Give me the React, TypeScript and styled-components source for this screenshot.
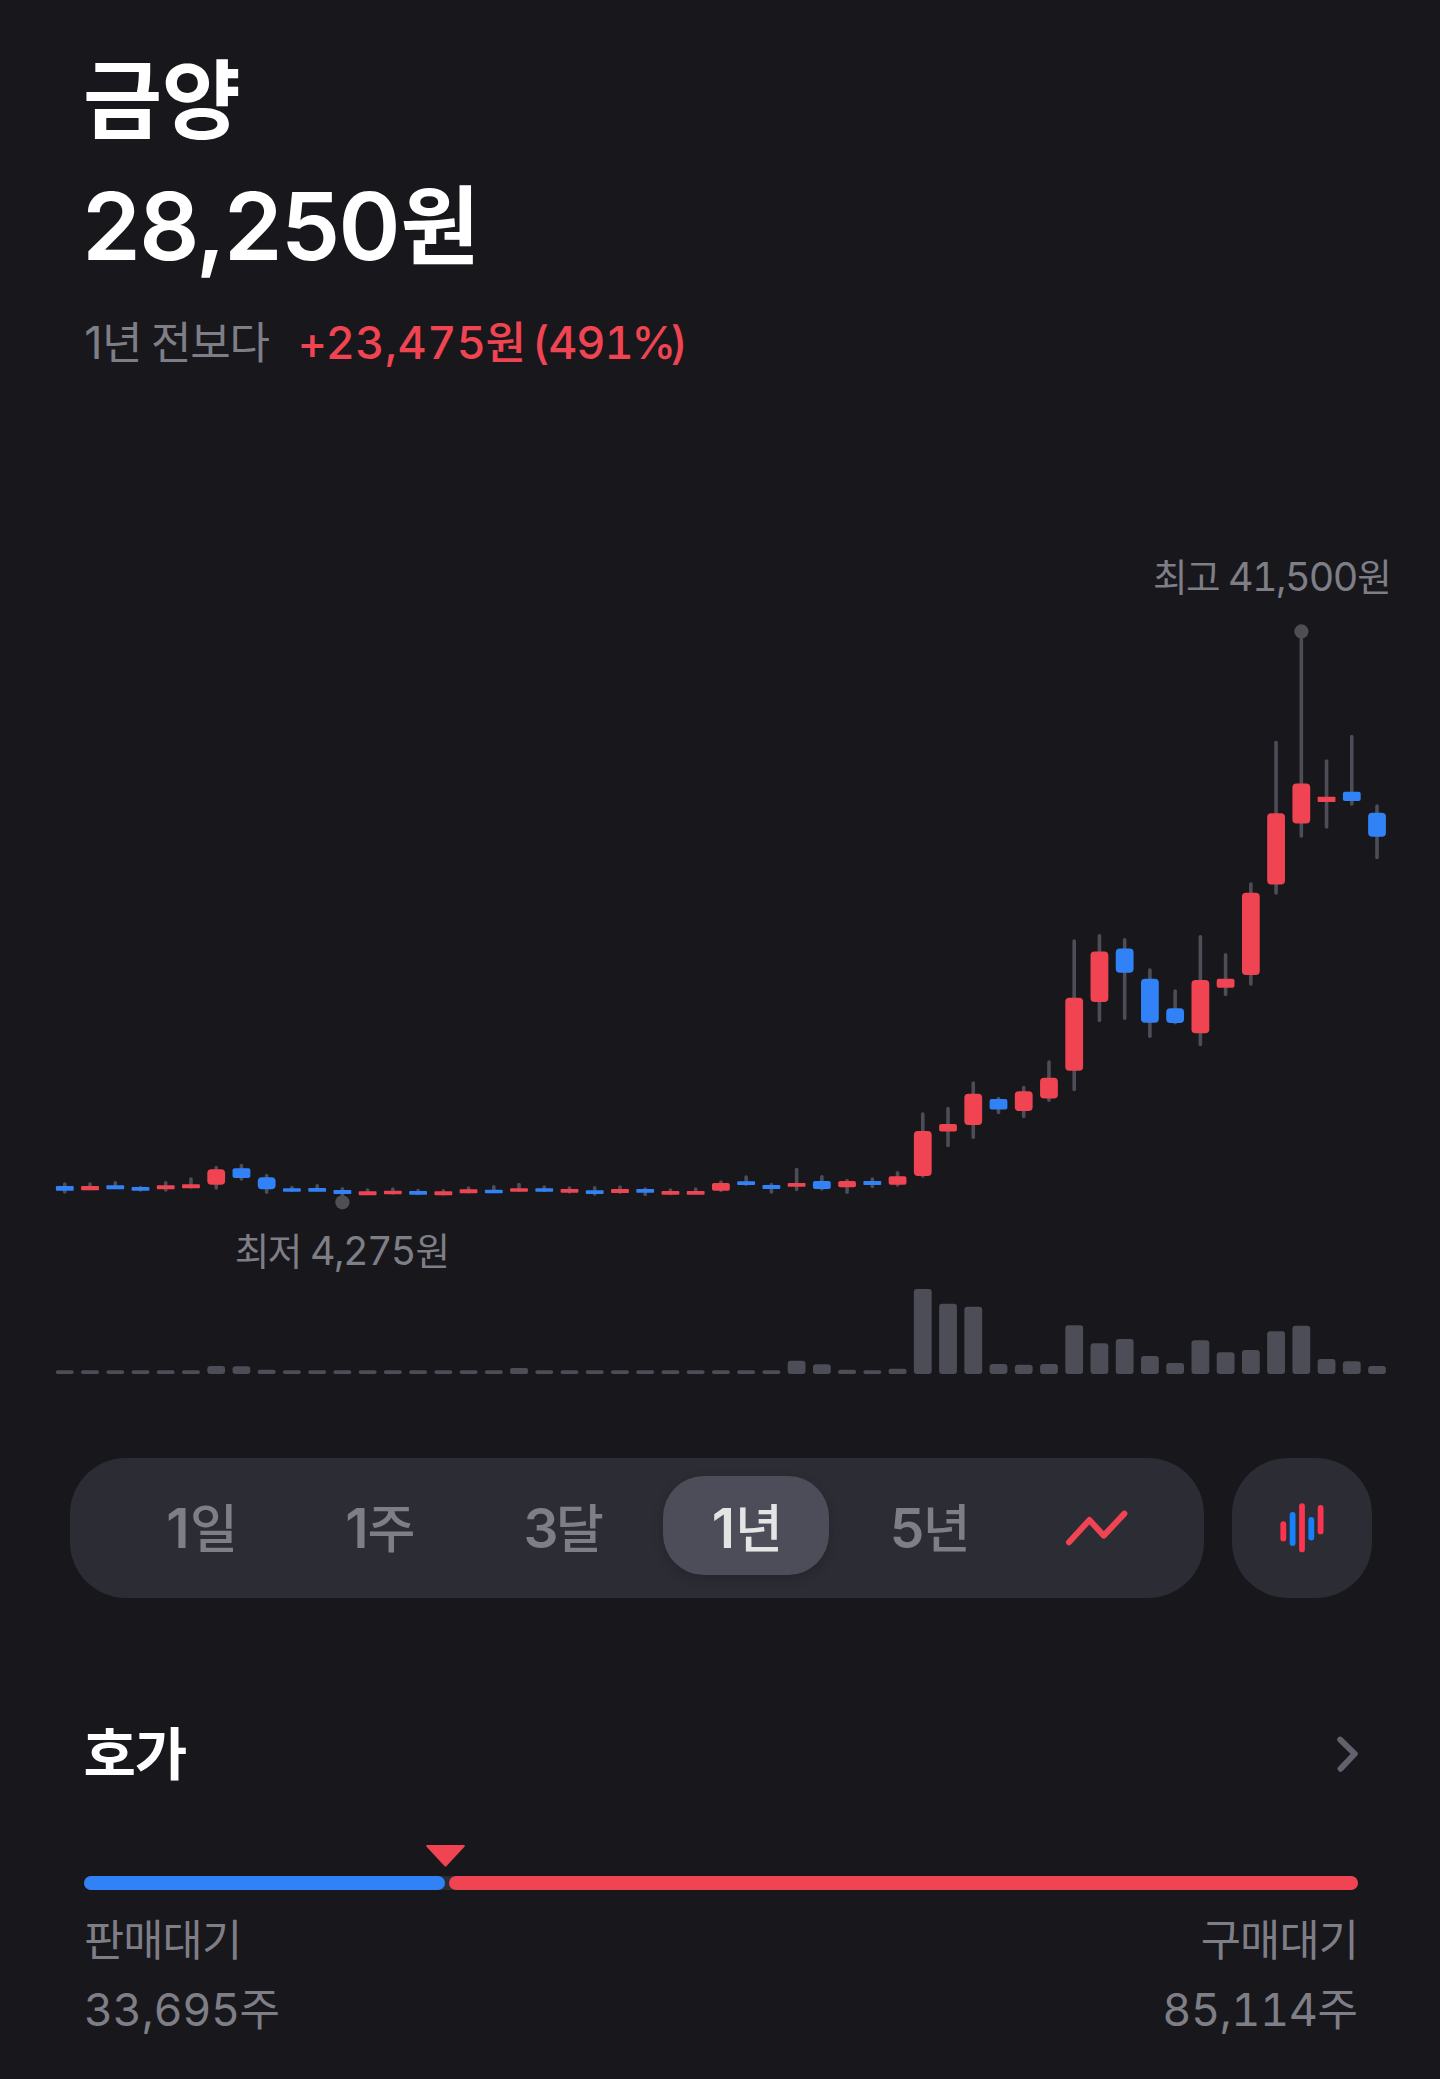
import React from 'react';
import styled, { createGlobalStyle } from 'styled-components';

const color = {
  background: '#18171c',
  surface: '#2c2c35',
  surfaceActive: '#4d4d59',
  rise: '#f04452',
  fall: '#3182f6',
  textMuted: '#7e7e87',
  wick: '#4d4d57',
};

const fontStack = 'Inter, "Noto Sans CJK KR", sans-serif';

const GlobalStyle = createGlobalStyle`
  html, body { margin: 0; background: ${color.background}; }
  *, *::before, *::after { box-sizing: border-box; }
`;

const Page = styled.main`
  width: 1440px;
  height: 2079px;
  overflow: hidden;
  display: flex;
  flex-direction: column;
  background: ${color.background};
  color: #fff;
  font-family: ${fontStack};
`;

const Line = styled.div<{ $size: number; $leading: number }>`
  font-size: ${(p) => p.$size}px;
  line-height: ${(p) => p.$leading}px;
  height: ${(p) => p.$leading}px;
  white-space: nowrap;
`;

interface RunProps {
  $size: number;
  $weight: number;
  $gap?: number;
  $tracking?: number;
  $tone?: string;
  $raise?: number;
}

const Run = styled.span<RunProps>`
  font-size: ${(p) => p.$size}px;
  font-weight: ${(p) => p.$weight};
  line-height: 0;
  margin-left: ${(p) => p.$gap ?? 0}px;
  letter-spacing: ${(p) => p.$tracking ?? 0}px;
  color: ${(p) => p.$tone ?? 'inherit'};
  vertical-align: ${(p) => p.$raise ?? 0}px;
`;

const Figures = styled(Run)`
  font-variant-numeric: tabular-nums;
`;

const Summary = styled.header`
  height: 370px;
  padding: 49px 83px 0;
`;

const PriceLine = styled(Line)`
  margin-top: 17px;
`;

const ChangeLine = styled(Line)`
  margin-top: 33px;
  color: ${color.textMuted};
`;

const ChartArea = styled.section`
  height: 1088px;
`;

const ChartSvg = styled.svg`
  display: block;
`;

const ChartLabel = styled.text`
  font-family: ${fontStack};
  fill: ${color.textMuted};
  font-variant-numeric: tabular-nums;
`;

const Controls = styled.nav`
  display: flex;
  gap: 28px;
  height: 139.5px;
  padding-left: 70px;
`;

const Periods = styled.div`
  display: flex;
  gap: 17px;
  width: 1134px;
  height: 100%;
  padding: 18px 40px 0 52px;
  border-radius: 56px;
  background: ${color.surface};
`;

const Period = styled.button<{ $width: number; $active?: boolean }>`
  width: ${(p) => p.$width}px;
  height: 99px;
  padding: 0;
  border: 0;
  border-radius: 41px;
  font: 55px/104px ${fontStack};
  text-align: center;
  white-space: nowrap;
  background: ${(p) => (p.$active ? color.surfaceActive : 'transparent')};
  color: ${(p) => (p.$active ? '#e4e4e5' : color.textMuted)};
  box-shadow: ${(p) => (p.$active ? '0 4px 12px rgba(0, 0, 0, 0.18)' : 'none')};
`;

const PeriodLabel = styled.span`
  display: block;
  height: 99px;
`;

const TrendButton = styled.button`
  display: flex;
  align-items: center;
  justify-content: center;
  width: 134px;
  height: 104px;
  padding: 0;
  border: 0;
  background: transparent;
`;

const CandleButton = styled.button`
  display: flex;
  align-items: center;
  justify-content: center;
  width: 140px;
  height: 100%;
  padding: 0;
  border: 0;
  border-radius: 56px;
  background: ${color.surface};
`;

const OrderBook = styled.section`
  padding: 123.5px 82px 0 84px;
`;

const OrderHeader = styled.div`
  display: flex;
  justify-content: space-between;
`;

const Chevron = styled.svg`
  display: block;
  margin-top: 14px;
`;

const Marker = styled.svg`
  display: block;
  margin: 56px 0 8.5px 342px;
`;

const Balance = styled.div`
  display: flex;
  gap: 4px;
  height: 14.5px;
  border-radius: 8px;
  background: ${color.surface};
`;

const Share = styled.div<{ $tone: string; $grow: number }>`
  flex: ${(p) => p.$grow} 0 0;
  border-radius: 8px;
  background: ${(p) => p.$tone};
`;

const Totals = styled.div`
  display: flex;
  justify-content: space-between;
  margin-top: 21px;
  color: ${color.textMuted};
`;

const Total = styled.div<{ $end?: boolean }>`
  text-align: ${(p) => (p.$end ? 'right' : 'left')};
`;

const QuantityLine = styled(Line)`
  margin-top: 4px;
`;

type Candle = [high: number, top: number, bottom: number, low: number, dir: 'r' | 'b', volume: number];

/* Each entry: wick top, body top, body bottom, wick bottom, direction, volume height */
const candles: Candle[] = [
  [1182.3, 1186, 1190.7, 1193.7, 'b', 3.7],
  [1182.3, 1186, 1190.3, 1190.3, 'r', 3.7],
  [1181, 1185.3, 1189.3, 1189.3, 'b', 3.7],
  [1185.7, 1187, 1190.7, 1191.7, 'b', 3.7],
  [1181, 1185.3, 1189.3, 1191.7, 'r', 3.7],
  [1177.3, 1184.3, 1188.3, 1188.7, 'r', 3.7],
  [1165.7, 1169.3, 1184.7, 1189.7, 'r', 8],
  [1163.7, 1168.3, 1178, 1180.7, 'b', 7.7],
  [1173.7, 1177.3, 1189.3, 1194, 'b', 4.3],
  [1185.7, 1188.3, 1191.7, 1192, 'b', 3.7],
  [1184, 1188, 1191.7, 1191.7, 'b', 3.7],
  [1187, 1190, 1194, 1196.7, 'b', 3.7],
  [1188.3, 1191.3, 1195.3, 1195.3, 'r', 3.7],
  [1187.3, 1190.7, 1194.3, 1194.7, 'r', 3.7],
  [1188.7, 1191, 1194.7, 1195.3, 'b', 3.7],
  [1189, 1191.3, 1195.3, 1195.7, 'r', 3.7],
  [1186.3, 1189.3, 1193.3, 1193.7, 'r', 3.7],
  [1185, 1189.7, 1193.3, 1193.3, 'b', 3.7],
  [1182.7, 1188.3, 1191.7, 1192, 'r', 6],
  [1185.3, 1188.3, 1191.7, 1192.3, 'b', 3.7],
  [1186.3, 1189, 1192.7, 1193.7, 'r', 3.7],
  [1186, 1190.3, 1194, 1195.7, 'b', 3.7],
  [1185.3, 1189, 1193, 1194, 'r', 3.7],
  [1187.3, 1189, 1192.7, 1196.3, 'b', 3.7],
  [1188.3, 1191, 1194.7, 1195.3, 'r', 3.7],
  [1187.3, 1191, 1194.7, 1194.7, 'r', 3.7],
  [1180.3, 1183, 1190.7, 1192.3, 'r', 3.7],
  [1175.3, 1181.3, 1185, 1186, 'b', 3.7],
  [1182.7, 1185, 1189, 1193.7, 'b', 3.7],
  [1167.7, 1183, 1186.7, 1191.3, 'r', 13.3],
  [1175, 1181, 1189, 1190.7, 'b', 9.7],
  [1178.7, 1181, 1187.3, 1194, 'r', 4.3],
  [1177.3, 1181, 1185, 1188.3, 'b', 3.7],
  [1171, 1176.3, 1184.7, 1186.7, 'r', 5.3],
  [1112.3, 1131, 1176, 1177.7, 'r', 85],
  [1106.7, 1124, 1131.5, 1147.3, 'r', 70.3],
  [1081.3, 1093.8, 1125, 1139, 'r', 67.3],
  [1096.7, 1099, 1109.5, 1114.3, 'b', 10],
  [1085.7, 1091.3, 1111, 1118.3, 'r', 9.3],
  [1060.3, 1077.8, 1098.5, 1102, 'r', 10],
  [939.3, 997.7, 1070.7, 1091.3, 'r', 48.7],
  [934, 951.5, 1002, 1022.3, 'r', 30.7],
  [938, 948.5, 972.7, 1020, 'b', 35],
  [968.3, 978.7, 1022.7, 1038, 'b', 18],
  [989.3, 1008.3, 1023, 1024.5, 'b', 11],
  [935, 980, 1033.3, 1046.3, 'r', 33.7],
  [953, 978.7, 987.7, 996.3, 'r', 21.7],
  [882.3, 892.7, 975, 985.7, 'r', 24],
  [740.7, 813.3, 884.5, 894.7, 'r', 42.7],
  [631, 783.5, 823.5, 837.7, 'r', 48.3],
  [759.3, 796.8, 802, 828.7, 'r', 15],
  [734.7, 791.7, 801, 805.7, 'b', 12.7],
  [804.3, 812.7, 836.8, 859.3, 'b', 8],
];

const FIRST_X = 64.8;
const STEP = 25.235;
const BODY_WIDTH = 17.8;
const VOLUME_BASE = 1374;

function PriceChart() {
  return (
    <ChartSvg width="1440" height="1088" viewBox="0 370 1440 1088">
      {candles.map(([high, top, bottom, low, dir, volume], i) => {
        const x = FIRST_X + i * STEP;
        const height = bottom - top;
        return (
          <g key={i}>
            <rect x={x - 1.8} y={high} width={3.6} height={low - high} rx={1.8} fill={color.wick} />
            <rect
              x={x - BODY_WIDTH / 2}
              y={top}
              width={BODY_WIDTH}
              height={height}
              rx={height < 6 ? 0.8 : height < 11 ? 2 : 4}
              fill={dir === 'r' ? color.rise : color.fall}
            />
            <rect
              x={x - BODY_WIDTH / 2}
              y={VOLUME_BASE - volume}
              width={BODY_WIDTH}
              height={volume}
              rx={volume < 7 ? 1.8 : 3}
              fill={color.wick}
            />
          </g>
        );
      })}
      <circle cx="1301.4" cy="631.4" r="7.1" fill="#4f4e53" />
      <circle cx="342.4" cy="1202.3" r="7.1" fill="#4f4e53" />
      <ChartLabel y="591.3">
        <tspan x="1153.1" fontSize="37.5" letterSpacing="-1.5">최고</tspan>
        <tspan x="1228" fontSize="39.5" letterSpacing="-1.65">41,500</tspan>
        <tspan x="1357.2" fontSize="37.5">원</tspan>
      </ChartLabel>
      <ChartLabel y="1264.6">
        <tspan x="234.8" fontSize="37.5" letterSpacing="-1.5">최저</tspan>
        <tspan x="310" fontSize="39.5" letterSpacing="-1.65">4,275</tspan>
        <tspan x="415.5" fontSize="37.5">원</tspan>
      </ChartLabel>
    </ChartSvg>
  );
}

const periods = [
  { figure: '1', unit: '일', width: 160, gap: 0.5, shift: 0 },
  { figure: '1', unit: '주', width: 164, gap: -1, shift: -1.2 },
  { figure: '3', unit: '달', width: 166, gap: -2.5, shift: 1.2 },
  { figure: '1', unit: '년', width: 166, gap: 0, shift: 2.4, active: true },
  { figure: '5', unit: '년', width: 166, gap: -1.7, shift: 2.2 },
];

export default function App() {
  return (
    <>
      <GlobalStyle />
      <Page>
        <Summary>
          <Line $size={86} $leading={104}>
            <Run $size={86} $weight={700} $tracking={-0.4}>금양</Run>
          </Line>
          <PriceLine $size={94} $leading={112}>
            <Run $size={94} $weight={600} $gap={-0.8} $tracking={-1.6}>28,250</Run>
            <Run $size={86} $weight={700} $gap={1.4} $raise={2}>원</Run>
          </PriceLine>
          <ChangeLine $size={45} $leading={56}>
            <Run $size={45} $weight={400} $gap={1.3}>1</Run>
            <Run $size={44} $weight={400} $gap={-0.7} $tracking={-1.3}>년</Run>
            <Run $size={44} $weight={400} $gap={10} $tracking={-1.3}>전보다</Run>
            <Figures $size={45} $weight={500} $gap={29} $tone={color.rise}>+</Figures>
            <Figures $size={45} $weight={500} $gap={-1.2} $tracking={0.5} $tone={color.rise}>23,475</Figures>
            <Run $size={44} $weight={500} $gap={-1} $tone={color.rise}>원</Run>
            <Figures $size={45} $weight={500} $gap={6} $tone={color.rise}>(</Figures>
            <Figures $size={45} $weight={500} $gap={-1.4} $tracking={-1} $tone={color.rise}>491</Figures>
            <Figures $size={45} $weight={500} $gap={-1.2} $tracking={-6} $tone={color.rise}>%)</Figures>
          </ChangeLine>
        </Summary>

        <ChartArea>
          <PriceChart />
        </ChartArea>

        <Controls>
          <Periods>
            {periods.map((p) => (
              <Period key={p.figure + p.unit} $width={p.width} $active={p.active}>
                <PeriodLabel>
                  <Run $size={55} $weight={600} $gap={p.shift}>{p.figure}</Run>
                  <Run $size={52} $weight={500} $gap={p.gap}>{p.unit}</Run>
                </PeriodLabel>
              </Period>
            ))}
            <TrendButton aria-label="line chart">
              <svg width="64" height="42" viewBox="1064 1506 64 42" fill="none">
                <path d="M1069 1541.2 L1089.4 1519 L1103.8 1534.6 L1124.4 1512.6" stroke={color.rise} strokeWidth="6" strokeLinecap="round" strokeLinejoin="round" />
              </svg>
            </TrendButton>
          </Periods>
          <CandleButton aria-label="candle chart">
            <svg width="44" height="50" viewBox="1280 1504 44 50">
              <rect x="1280.4" y="1522.3" width="5.8" height="20" rx="2.9" fill="#fb3550" />
              <rect x="1289.7" y="1513" width="5.8" height="34" rx="2.9" fill="#1681fb" />
              <rect x="1299.1" y="1504.3" width="5.8" height="49" rx="2.9" fill="#fb3550" />
              <rect x="1308.4" y="1518" width="5.8" height="23.5" rx="2.9" fill="#1681fb" />
              <rect x="1317.7" y="1506" width="5.8" height="29.3" rx="2.9" fill="#fb3550" />
            </svg>
          </CandleButton>
        </Controls>

        <OrderBook>
          <OrderHeader>
            <Line $size={57} $leading={68}>
              <Run $size={57} $weight={700} $gap={-0.6} $tracking={-1}>호가</Run>
            </Line>
            <Chevron width="22" height="38" viewBox="1336 1735 22 38" fill="none">
              <path d="M1340.2 1739.6 L1354.8 1753.8 L1340.6 1768.8" stroke="#62626c" strokeWidth="6" strokeLinecap="round" strokeLinejoin="round" />
            </Chevron>
          </OrderHeader>
          <Marker width="39" height="22" viewBox="0 0 39 22">
            <path d="M1 0 H38 Q39.4 0.4 38.4 1.8 L20.6 21 Q19.5 22 18.4 21 L0.6 1.8 Q-0.4 0.4 1 0 Z" fill={color.rise} />
          </Marker>
          <Balance>
            <Share $tone={color.fall} $grow={361} />
            <Share $tone={color.rise} $grow={909} />
          </Balance>
          <Totals>
            <Total>
              <Line $size={43.7} $leading={60}>
                <Run $size={43.7} $weight={400} $tracking={-0.9}>판매대기</Run>
              </Line>
              <QuantityLine $size={45} $leading={70}>
                <Figures $size={45} $weight={400} $tracking={-0.35}>33,695</Figures>
                <Run $size={44} $weight={400} $gap={-0.5}>주</Run>
              </QuantityLine>
            </Total>
            <Total $end>
              <Line $size={43.7} $leading={60}>
                <Run $size={43.7} $weight={400} $tracking={-0.9}>구매대기</Run>
              </Line>
              <QuantityLine $size={45} $leading={70}>
                <Figures $size={45} $weight={400} $tracking={-0.45}>85,114</Figures>
                <Run $size={44} $weight={400}>주</Run>
              </QuantityLine>
            </Total>
          </Totals>
        </OrderBook>
      </Page>
    </>
  );
}
